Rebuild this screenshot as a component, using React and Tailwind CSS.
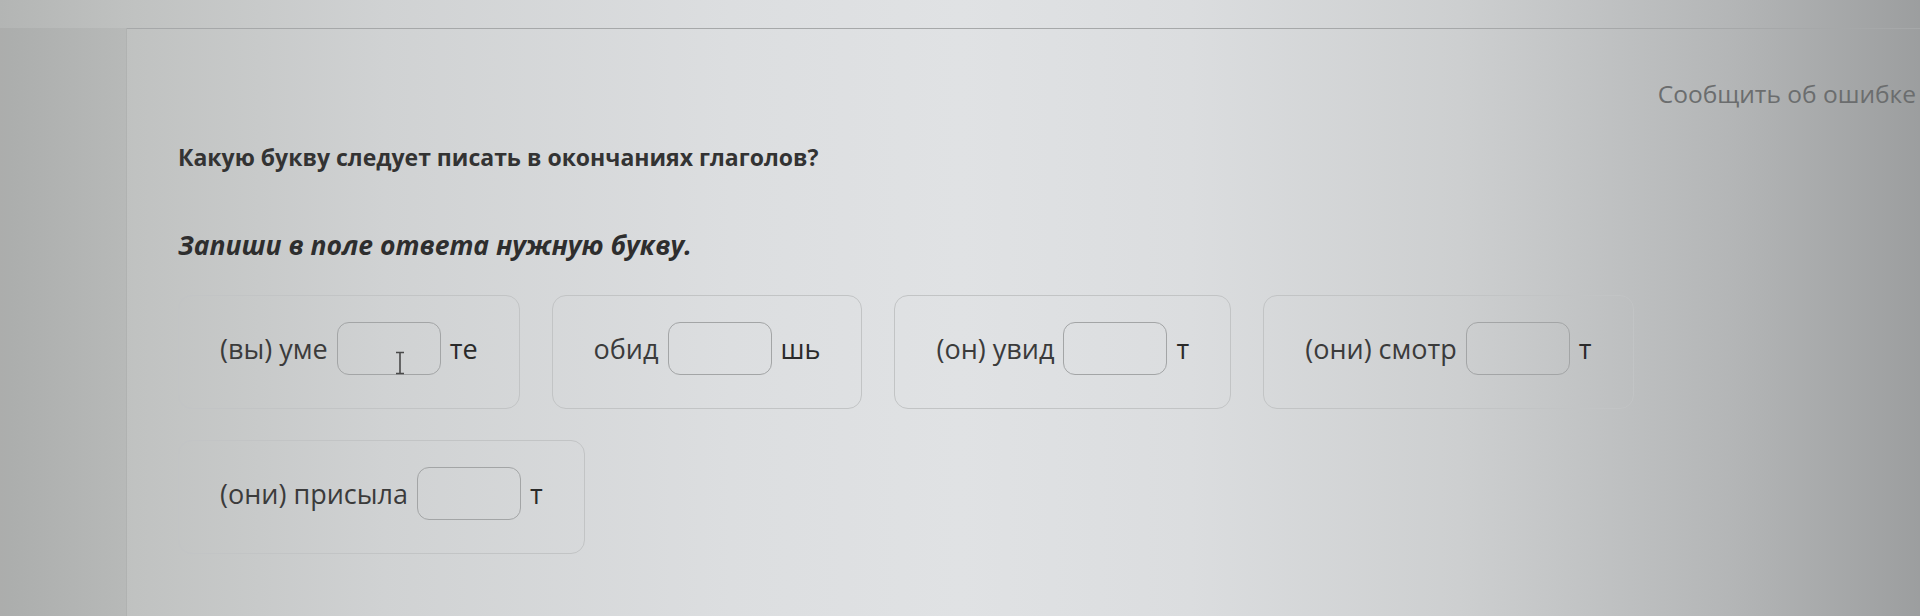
import React from 'react';

const items = [
  { before: '(вы) уме', after: 'те', cursor: true },
  { before: 'обид', after: 'шь' },
  { before: '(он) увид', after: 'т' },
  { before: '(они) смотр', after: 'т' },
  { before: '(они) присыла', after: 'т' },
];

const Gap = ({ before, after, cursor }) => (
  <div className="flex items-center gap-[9px] rounded-[14px] border border-[#c2c4c5] px-[41px] pt-[26px] pb-[33px]">
    <span className="text-[27px] leading-[36px] text-[#3b3b3b]">{before}</span>
    <div className="relative h-[53px] w-[104px] rounded-[12px] border border-[#a3a5a6]">
      {cursor && (
        <svg className="absolute left-[56px] top-[28px]" width="12" height="24" viewBox="0 0 12 24" fill="none" stroke="#4a4a4a" strokeWidth="1.6">
          <path d="M2 1.5h8M6 1.5v21M2 22.5h8" />
        </svg>
      )}
    </div>
    <span className="text-[27px] leading-[36px] text-[#2a2a2a]">{after}</span>
  </div>
);

export default function App() {
  return (
    <div className="h-[616px] w-[1920px] overflow-hidden bg-[linear-gradient(90deg,#b3b5b4_0%,#c0c2c1_7%,#d0d2d3_20%,#dcdee0_38%,#e0e2e4_50%,#dbdddf_62%,#cdcfd0_76%,#b4b6b7_90%,#9c9e9f_100%)] pt-[28px] font-['Open_Sans',sans-serif]">
      <div className="flex h-full">
        <div className="w-[127px] shrink-0 border-r border-[#b0b2b1] bg-black/[0.04]" />
        <div className="flex-1 border-t border-[#a6a8a9] pl-[51px]">
          <div className="flex justify-end pt-[48px] pr-[4px]">
            <span className="text-[24.5px] leading-[34px] text-[#6b6d6e]">Сообщить об ошибке</span>
          </div>
          <p className="mt-[30px] text-[23px] leading-[32px] font-bold text-[#333333]">
            Какую букву следует писать в окончаниях глаголов?
          </p>
          <p className="mt-[54px] text-[26.5px] leading-[36px] font-bold italic text-[#2e2e2e]">
            Запиши в поле ответа нужную букву.
          </p>
          <div className="mt-[32px] flex max-w-[1500px] flex-wrap gap-x-[32px] gap-y-[31px]">
            {items.map((it, i) => (
              <Gap key={i} {...it} />
            ))}
          </div>
        </div>
      </div>
    </div>
  );
}
